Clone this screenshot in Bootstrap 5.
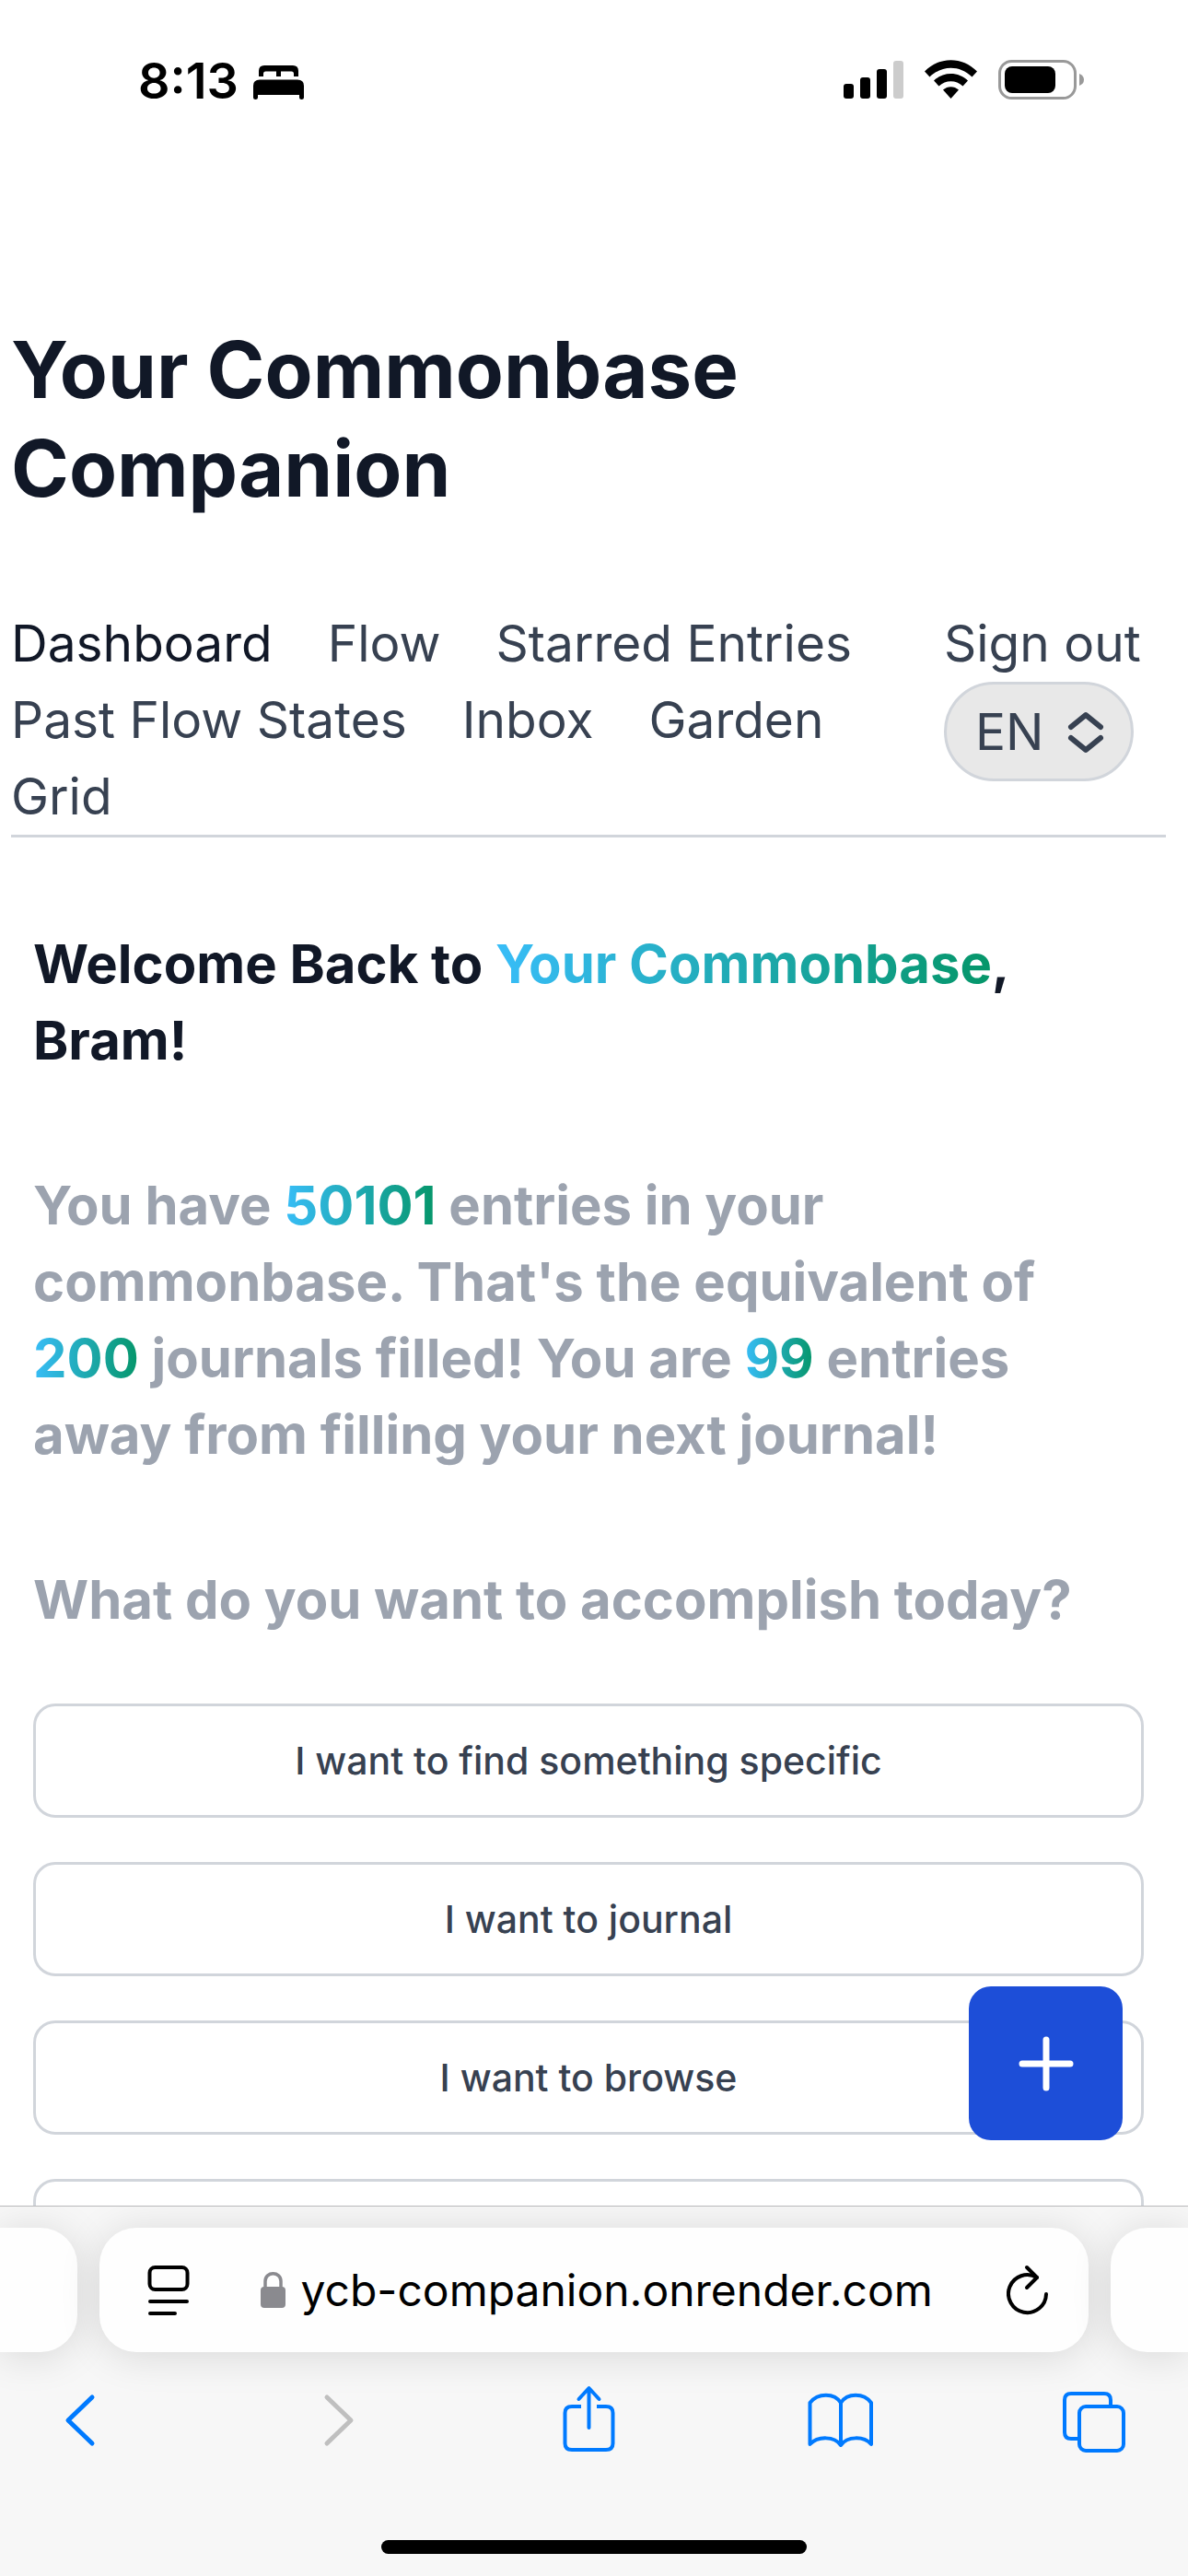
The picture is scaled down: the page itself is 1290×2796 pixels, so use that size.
<!DOCTYPE html>
<html lang="en">
<head>
<meta charset="utf-8">
<meta name="viewport" content="width=device-width, initial-scale=1">
<title>Your Commonbase Companion</title>
<link href="https://cdn.jsdelivr.net/npm/bootstrap@5.3.0/dist/css/bootstrap.min.css" rel="stylesheet">
<style>
  body { font-family: Inter, "Liberation Sans", sans-serif; color: #111827; background: #fff; }
  svg { display: block; flex: none; }
  .status-bar { padding: 65px 113px 0 150px; height: 144px; color: #000; }
  .status-time { font-size: 54px; line-height: 46px; font-weight: 600; }
  .status-icons { gap: 23px; }
  .site-header { padding: 204px 24px 0 12px; }
  .site-title { font-size: 85px; line-height: 107px; font-weight: 700; }
  .site-nav { margin-top: 95px; border-bottom: 3px solid #d1d5db; font-size: 55px; line-height: 83px; }
  .site-nav a { color: #374151; text-decoration: none; }
  .site-nav a.current { color: #111827; }
  .nav-links { column-gap: 60px; }
  .nav-side { width: 241px; }
  .lang { width: 206px; height: 108px; }
  .lang select { appearance: none; width: 100%; height: 100%; border: 3px solid #d1d5db; border-radius: 54px; background: #e8e8e8; color: #374151; padding: 0 0 0 31px; font-size: 55px; line-height: 83px; }
  .lang svg { position: absolute; right: 32px; top: 32px; pointer-events: none; }
  .content { padding: 96px 48px 0 36px; }
  .copy { font-size: 58px; line-height: 83px; font-weight: 700; margin: 0; }
  .muted-copy { color: #9ca3af; margin-top: 96px; }
  .fade-text { background: linear-gradient(to right, #38bdf8, #059669); -webkit-background-clip: text; background-clip: text; color: transparent; }
  .choices { margin-top: 71px; gap: 48px; }
  .choice { height: 124px; border: 3px solid #d1d5db; border-radius: 24px; background: #fff; color: #374151; font-size: 41px; line-height: 60px; font-weight: 500; }
  .fab { position: absolute; right: 71px; bottom: 71px; width: 167px; height: 167px; border: 0; border-radius: 24px; background: #1d4ed8; padding: 0; }
  .browser-bar { background: #f7f7f7; border-top: 1px solid #b9b9bb; height: 402px; overflow: hidden; color: #000; }
  .tab-row { margin-top: 23px; gap: 24px; }
  .tab-card { background: #fefefe; height: 135px; border-radius: 40px; box-shadow: 0 4px 44px rgba(0,0,0,.13); }
  .tab-prev, .tab-next { width: 84px; flex: none; }
  .tab-prev { border-top-left-radius: 0; border-bottom-left-radius: 0; }
  .tab-next { border-top-right-radius: 0; border-bottom-right-radius: 0; }
  .tab-main { padding: 0 43px 0 52px; }
  .plain-btn { border: 0; background: none; padding: 0; }
  .address { border: 0; background: none; padding: 0; width: 690px; font-size: 48px; line-height: 60px; color: #000; }
  .tool-row { padding: 35px 67px 0 50px; }
  .tool-row button { width: 72px; height: 76px; }
  .home-bar { width: 462px; height: 15px; border-radius: 8px; background: #000; margin: 93px auto 0; }
</style>
</head>
<body>
<div class="vh-100 d-flex flex-column overflow-hidden">
  <div class="flex-grow-1 position-relative overflow-hidden">
    <div class="status-bar d-flex justify-content-between align-items-start">
      <div class="d-flex align-items-center">
        <span class="status-time">8:13</span>
        <svg class="ms-3" width="56" height="44" viewBox="0 0 56 44" role="img" aria-label="Sleep focus"><path d="M6 17V11Q6 5 12 5H43Q49 5 49 11V17H44V14Q44 11.500 41.500 11.500H30V17H25V11.500H13.500Q11 11.500 11 14V17Z"/><path d="M0 40V27Q0 20.500 7 20.500H48Q55 20.500 55 27V40Q55 42 52.500 42Q50 42 50 40V37H5V40Q5 42 2.500 42Q0 42 0 40Z"/></svg>
      </div>
      <div class="status-icons d-flex align-items-start">
        <svg width="65" height="44" viewBox="0 0 65 44" role="img" aria-label="Signal"><rect y="26" width="11" height="16" rx="3"/><rect x="18" y="19" width="11" height="23" rx="3"/><rect x="36" y="10" width="11" height="32" rx="3"/><rect x="54" y="1" width="11" height="41" rx="3" fill="#ccc"/></svg>
        <svg width="57" height="44" viewBox="0 0 57 44" role="img" aria-label="Wi-Fi"><path d="M0 12.500C16-4 41-4 57 12.500L51.500 18.500C38 5.500 19 5.500 5.500 18.500Z"/><path d="M10 22.500C20 12.500 37 12.500 47 22.500L41.500 28.500C34 21.500 23 21.500 15.500 28.500Z"/><path d="M20 32.500C25 28 32 28 37 32.500L28.500 42Z"/></svg>
        <svg width="93" height="44" viewBox="0 0 93 44" role="img" aria-label="Battery"><rect x="1.500" y="1.500" width="82" height="40" rx="13" fill="none" stroke="#999" stroke-width="3"/><rect x="7" y="7" width="55" height="29" rx="8"/><path d="M88 15Q93 17 93 21.500T88 28Z" fill="#999"/></svg>
      </div>
    </div>

    <header class="site-header">
      <h1 class="site-title mb-0">Your Commonbase<br>Companion</h1>
      <nav class="site-nav d-flex" aria-label="Main">
        <div class="nav-links d-flex flex-wrap flex-grow-1">
          <a href="#" class="current" aria-current="page">Dashboard</a>
          <a href="#">Flow</a>
          <a href="#">Starred Entries</a>
          <a href="#">Past Flow States</a>
          <a href="#">Inbox</a>
          <a href="#">Garden</a>
          <a href="#">Grid</a>
        </div>
        <div class="nav-side flex-shrink-0">
          <a href="#" class="text-nowrap">Sign out</a>
          <div class="lang position-relative">
            <select aria-label="Language"><option>EN</option><option>FR</option></select>
            <svg width="40" height="46" viewBox="0 0 40 46" fill="none" stroke="#374151" stroke-width="6" stroke-linecap="round" stroke-linejoin="round" aria-hidden="true"><path d="M4 17L20 4L36 17M4 29L20 42L36 29"/></svg>
          </div>
        </div>
      </nav>
    </header>

    <main class="content">
      <h2 class="copy">Welcome Back to <span class="fade-text">Your Commonbase</span>, Bram!</h2>
      <p class="copy muted-copy">You have <span class="fade-text">50101</span> entries in your commonbase. That's the equivalent of <span class="fade-text">200</span> journals filled! You are <span class="fade-text">99</span> entries away from filling your next journal!</p>
      <p class="copy muted-copy">What do you want to accomplish today?</p>
      <div class="choices d-flex flex-column">
        <button type="button" class="choice">I want to find something specific</button>
        <button type="button" class="choice">I want to journal</button>
        <button type="button" class="choice">I want to browse</button>
        <button type="button" class="choice" aria-label="More"></button>
      </div>
    </main>

    <button type="button" class="fab d-flex align-items-center justify-content-center" aria-label="Add entry">
      <svg width="60" height="60" viewBox="0 0 60 60" stroke="#fff" stroke-width="7" stroke-linecap="round" aria-hidden="true"><path d="M30 4V56M4 30H56"/></svg>
    </button>
  </div>

  <footer class="browser-bar flex-shrink-0">
    <div class="tab-row d-flex">
      <div class="tab-card tab-prev"></div>
      <div class="tab-card tab-main flex-grow-1 d-flex align-items-center justify-content-between">
        <button type="button" class="plain-btn" aria-label="Page menu"><svg width="46" height="56" viewBox="0 0 46 56" fill="none" stroke="#000" stroke-width="4" stroke-linecap="round"><rect x="2.500" y="3" width="41" height="24" rx="6"/><path d="M3 40H43M3 53H30"/></svg></button>
        <div class="d-flex align-items-center">
          <svg width="28" height="42" viewBox="0 0 28 42" aria-hidden="true"><rect y="17" width="27" height="23" rx="4" fill="#8a8a8f"/><path d="M5 18V11C5 0 22 0 22 11V18" fill="none" stroke="#8a8a8f" stroke-width="3.500"/></svg>
          <input class="address ms-3" type="text" value="ycb-companion.onrender.com" aria-label="Address">
        </div>
        <button type="button" class="plain-btn" aria-label="Reload"><svg width="46" height="56" viewBox="0 0 46 56" fill="none" stroke="#000" stroke-width="4" stroke-linecap="round" stroke-linejoin="round"><path d="M43 32A20.500 20.500 0 1 1 33 14"/><path d="M22 3L33 14L22 25"/></svg></button>
      </div>
      <div class="tab-card tab-next"></div>
    </div>
    <div class="tool-row d-flex justify-content-between">
      <button type="button" class="plain-btn" aria-label="Back"><svg width="72" height="76" viewBox="0 0 72 76" fill="none" stroke="#007aff" stroke-width="5" stroke-linecap="round" stroke-linejoin="round"><path d="M50 14L24 39L50 64"/></svg></button>
      <button type="button" class="plain-btn" aria-label="Forward" disabled><svg width="72" height="76" viewBox="0 0 72 76" fill="none" stroke="#bfbfbf" stroke-width="5" stroke-linecap="round" stroke-linejoin="round"><path d="M30 14L56 39L30 64"/></svg></button>
      <button type="button" class="plain-btn" aria-label="Share"><svg width="72" height="76" viewBox="0 0 72 76" fill="none" stroke="#007aff" stroke-width="4" stroke-linecap="round" stroke-linejoin="round"><path stroke-linecap="butt" d="M30 24H20Q12.500 24 12.500 31V64Q12.500 71 20 71H57Q64.500 71 64.500 64V31Q64.500 24 57 24H47"/><path d="M38.500 47V5M27.500 16L38.500 4L49.500 16"/></svg></button>
      <button type="button" class="plain-btn" aria-label="Bookmarks"><svg width="72" height="76" viewBox="0 0 72 76" fill="none" stroke="#007aff" stroke-width="4" stroke-linecap="round" stroke-linejoin="round"><path d="M37 20C30 9 12 9 3.500 20V65C12 56 30 56 37 66C44 56 62 56 70 65V20C62 9 44 9 37 20V66"/></svg></button>
      <button type="button" class="plain-btn" aria-label="Tabs"><svg width="72" height="76" viewBox="0 0 72 76" fill="none" stroke="#007aff" stroke-width="4" stroke-linejoin="round"><path d="M21 59H12Q5 59 5 52V17Q5 10 12 10H48Q55 10 55 17V24"/><rect x="21" y="24" width="48" height="48" rx="7"/></svg></button>
    </div>
    <div class="home-bar"></div>
  </footer>
</div>
<script src="https://cdn.jsdelivr.net/npm/bootstrap@5.3.0/dist/js/bootstrap.bundle.min.js"></script>
</body>
</html>
